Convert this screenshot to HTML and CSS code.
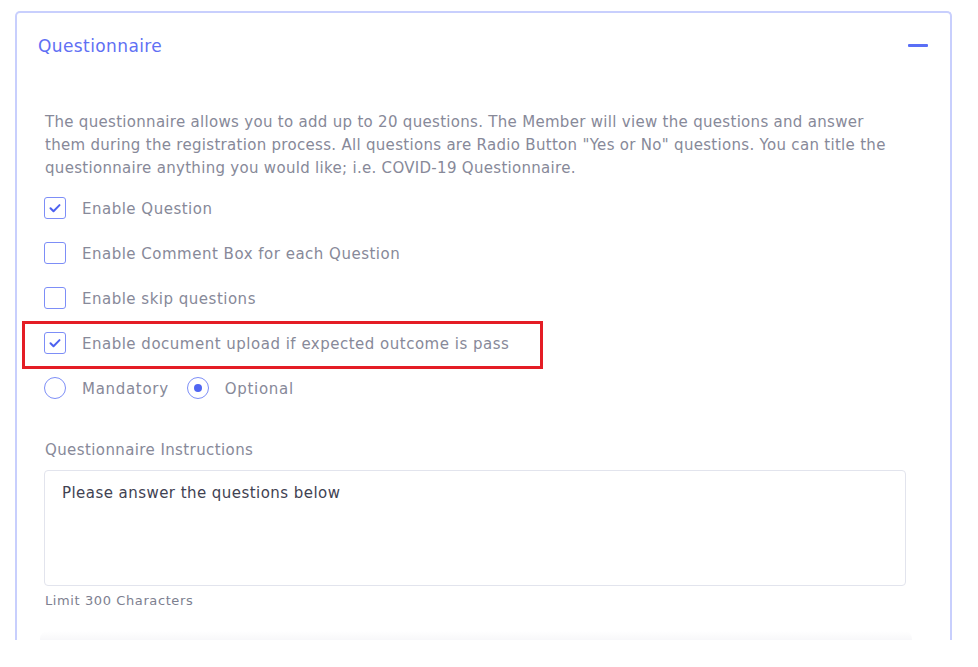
FILE: index.html
```html
<!DOCTYPE html>
<html lang="en">
<head>
<meta charset="utf-8">
<title>Questionnaire</title>
<link rel="stylesheet" href="styles.css">
</head>
<body>
<div class="viewport">
  <section class="card">
    <header class="card-head">
      <h2 class="card-title">Questionnaire</h2>
      <span class="collapse" aria-label="Collapse"></span>
    </header>
    <div class="card-body">
      <p class="intro">The questionnaire allows you to add up to 20 questions. The Member will view the questions and answer them during the registration process. All questions are Radio Button "Yes or No" questions. You can title the questionnaire anything you would like; i.e. COVID-19 Questionnaire.</p>

      <label class="opt">
        <span class="box checked"><svg viewBox="0 0 22 22" width="22" height="22"><path d="M6.5 11.3l3 3 6-6.2" fill="none" stroke="#4d61f0" stroke-width="2" stroke-linecap="round" stroke-linejoin="round"/></svg></span>
        <span class="opt-text">Enable Question</span>
      </label>
      <label class="opt">
        <span class="box"></span>
        <span class="opt-text">Enable Comment Box for each Question</span>
      </label>
      <label class="opt">
        <span class="box"></span>
        <span class="opt-text">Enable skip questions</span>
      </label>
      <label class="opt flagged">
        <span class="box checked"><svg viewBox="0 0 22 22" width="22" height="22"><path d="M6.5 11.3l3 3 6-6.2" fill="none" stroke="#4d61f0" stroke-width="2" stroke-linecap="round" stroke-linejoin="round"/></svg></span>
        <span class="opt-text">Enable document upload if expected outcome is pass</span>
        <span class="highlight"></span>
      </label>
      <div class="radios">
        <label class="radio"><span class="dot"></span><span class="opt-text">Mandatory</span></label>
        <label class="radio"><span class="dot on"></span><span class="opt-text">Optional</span></label>
      </div>

      <div class="field">
        <div class="field-label">Questionnaire Instructions</div>
        <div class="textarea">Please answer the questions below</div>
        <div class="hint">Limit 300 Characters</div>
      </div>
      <div class="next"></div>
    </div>
  </section>
</div>
</body>
</html>
```

FILE: styles.css
```css
* { box-sizing: border-box; }
html, body { margin: 0; padding: 0; background: #fff; }
body {
  font-family: "DejaVu Sans", "Open Sans", sans-serif;
  color: #878999;
}
.viewport {
  height: 640px;
  overflow: hidden;
  padding: 11px 0 0 15px;
}
.card {
  width: 937px;
  border: 2px solid #c8cffd;
  border-bottom: none;
  border-radius: 5px 5px 0 0;
  height: 700px;
}
.card-head {
  height: 72px;
  display: flex;
  align-items: flex-start;
  justify-content: space-between;
  padding: 20px 22px 0 21px;
}
.card-title {
  margin: 0;
  font-size: 17px;
  line-height: 26px;
  letter-spacing: 0.4px;
  font-weight: 400;
  color: #5f70f4;
}
.collapse {
  width: 20px;
  height: 3px;
  margin-top: 11px;
  background: #5a6ff6;
  border-radius: 1px;
}
.card-body {
  padding: 26px 44px 0 27px;
}
.intro {
  margin: 0 0 0 1px;
  font-size: 15px;
  line-height: 23px;
  letter-spacing: 0.3px;
}
.opt {
  display: flex;
  align-items: center;
  height: 22px;
  margin-top: 23px;
  position: relative;
}
.intro + .opt { margin-top: 17px; }
.opt-text {
  font-size: 15px;
  line-height: 22px;
  letter-spacing: 0.5px;
  margin-left: 16px;
  padding-top: 1px;
}
.box {
  width: 22px;
  height: 22px;
  flex: none;
  border: 1.6px solid #7d8ef7;
  border-radius: 3px;
  display: flex;
  align-items: center;
  justify-content: center;
}
.box svg { display: block; margin: -1.6px; }
.highlight {
  position: absolute;
  left: -22px;
  top: -11px;
  width: 521px;
  height: 48px;
  border: 3px solid #e41d25;
  pointer-events: none;
}
.radios {
  display: flex;
  align-items: center;
  margin-top: 23px;
  height: 22px;
}
.radio {
  display: flex;
  align-items: center;
  margin-right: 18px;
}
.radio .opt-text { letter-spacing: 0.7px; }
.dot {
  width: 22px;
  height: 22px;
  flex: none;
  border: 1.6px solid #7d8ef7;
  border-radius: 50%;
  display: flex;
  align-items: center;
  justify-content: center;
}
.dot.on::after {
  content: "";
  width: 8px;
  height: 8px;
  border-radius: 50%;
  background: #5166f2;
}
.field { margin-top: 39px; margin-left: 1px; }
.field-label {
  font-size: 15px;
  line-height: 22px;
  letter-spacing: 0.4px;
  padding-top: 1px;
}
.textarea {
  margin-top: 9px;
  margin-left: -1px;
  height: 116px;
  border: 1px solid #e2e4ed;
  border-radius: 4px;
  padding: 11px 17px 10px;
  font-size: 15px;
  line-height: 22px;
  letter-spacing: 0.45px;
  color: #3f4252;
}
.hint {
  margin-top: 6px;
  font-size: 13px;
  line-height: 18px;
  letter-spacing: 0.6px;
  color: #7d8090;
}
.next {
  margin-top: 21px;
  margin-left: -4px;
  margin-right: -6px;
  height: 30px;
  border-radius: 8px;
  background: linear-gradient(#ffffff, #f7f7f9 10px);
}
```
